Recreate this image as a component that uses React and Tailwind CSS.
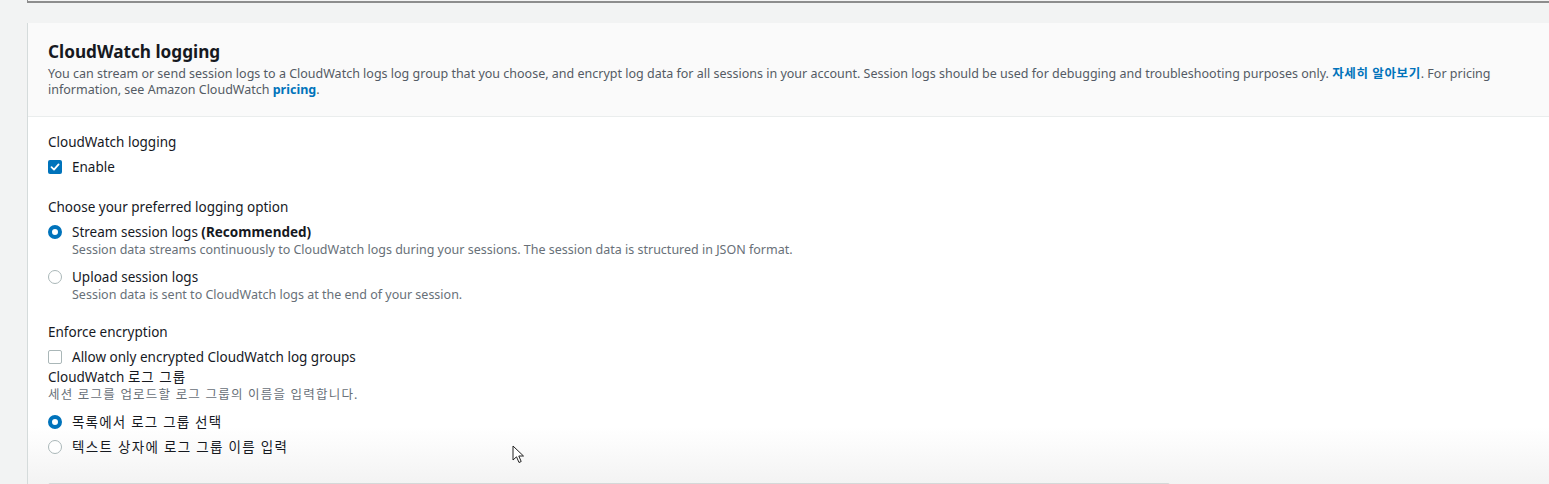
import React from 'react';

const Checkbox = ({ checked }) =>
  checked ? (
    <span className="flex h-[14px] w-[14px] items-center justify-center rounded-[2px] bg-[#0073bb]">
      <svg width="10" height="10" viewBox="0 0 10 10" fill="none">
        <path d="M1.5 5.2 L4 7.6 L8.6 2.4" stroke="white" strokeWidth="1.8" strokeLinecap="round" strokeLinejoin="round" />
      </svg>
    </span>
  ) : (
    <span className="block h-[14px] w-[14px] rounded-[2px] border border-[#aab7b8] bg-white" />
  );

const Radio = ({ checked }) =>
  checked ? (
    <span className="block h-[14px] w-[14px] rounded-full border-[4px] border-[#0073bb] bg-white" />
  ) : (
    <span className="block h-[14px] w-[14px] rounded-full border border-[#aab7b8] bg-white" />
  );

const Option = ({ control, label, desc, className = '' }) => (
  <div className={`flex items-start gap-[10px] ${className}`}>
    <div className="flex h-5 items-center">{control}</div>
    <div>
      <div className="text-[13.5px] leading-5 text-[#16191f]">{label}</div>
      {desc && <div className="text-[12.5px] leading-4 text-[#687078]">{desc}</div>}
    </div>
  </div>
);

export default function App() {
  return (
    <div
      className="relative h-[484px] overflow-hidden bg-[#f2f3f3] pl-[27px]"
      style={{ fontFamily: '"Noto Sans", "Noto Sans CJK KR", sans-serif' }}
    >
      {/* panel above */}
      <div className="h-[3px] border-b-2 border-l border-[#8d8d8d] bg-[#f4f4f4]" />
      <div className="h-5" />

      {/* CloudWatch logging card */}
      <div className="border-l border-[#d5dbdb] bg-white">
        <div className="border-b border-[#eaeded] bg-[#fafafa] px-5 pb-[18px] pt-[18px]">
          <h2 className="text-[17.2px] font-bold leading-[22px] text-[#16191f]">CloudWatch logging</h2>
          <p className="mt-[3px] whitespace-nowrap text-[12.5px] leading-4 text-[#545b64]">
            You can stream or send session logs to a CloudWatch logs log group that you choose, and encrypt log data for all
            sessions in your account. Session logs should be used for debugging and troubleshooting purposes only.{' '}
            <span className="font-bold tracking-[0.6px] text-[#0073bb]">자세히 알아보기</span>. For pricing
            <br />
            information, see Amazon CloudWatch <span className="font-bold text-[#0073bb]">pricing</span>.
          </p>
        </div>

        <div className="bg-[linear-gradient(to_bottom,#ffffff_0px,#ffffff_310px,#f3f3f3_367px)] px-5 pb-8 pt-[15px]">
          <div className="text-[13.5px] leading-5 text-[#16191f]">CloudWatch logging</div>
          <Option className="mt-[5px]" control={<Checkbox checked />} label="Enable" />

          <div className="mt-5 text-[13.5px] leading-5 text-[#16191f]">Choose your preferred logging option</div>
          <Option
            className="mt-[5px]"
            control={<Radio checked />}
            label={
              <>
                Stream session logs <span className="font-bold">(Recommended)</span>
              </>
            }
            desc="Session data streams continuously to CloudWatch logs during your sessions. The session data is structured in JSON format."
          />
          <Option
            className="mt-[9px]"
            control={<Radio />}
            label="Upload session logs"
            desc="Session data is sent to CloudWatch logs at the end of your session."
          />

          <div className="mt-[19px] text-[13.5px] leading-5 text-[#16191f]">Enforce encryption</div>
          <Option className="mt-[5px]" control={<Checkbox />} label="Allow only encrypted CloudWatch log groups" />

          <div className="text-[13.5px] leading-5 text-[#16191f]">
            CloudWatch <span className="tracking-[1px]">로그 그룹</span>
          </div>
          <div className="text-[12.5px] leading-4 tracking-[1.2px] text-[#687078]">
            세션 로그를 업로드할 로그 그룹의 이름을 입력합니다.
          </div>
          <Option
            className="mt-[9px]"
            control={<Radio checked />}
            label={<span className="tracking-[1.2px]">목록에서 로그 그룹 선택</span>}
          />
          <Option
            className="mt-[5px]"
            control={<Radio />}
            label={<span className="tracking-[1.3px]">텍스트 상자에 로그 그룹 이름 입력</span>}
          />

          <div className="mt-[26px] h-8 w-[1122px] rounded-[2px] border border-[#d5d8d8] bg-[#f5f5f5]" />
        </div>
      </div>

      {/* mouse cursor */}
      <svg className="absolute left-[512px] top-[445px]" width="13" height="20" viewBox="0 0 13 20">
        <path d="M1 1 L1 15 L4.5 11.8 L7 17.5 L9.2 16.5 L6.8 11 L11.5 11 Z" fill="white" stroke="#222" strokeWidth="1" strokeLinejoin="round" />
      </svg>
    </div>
  );
}
